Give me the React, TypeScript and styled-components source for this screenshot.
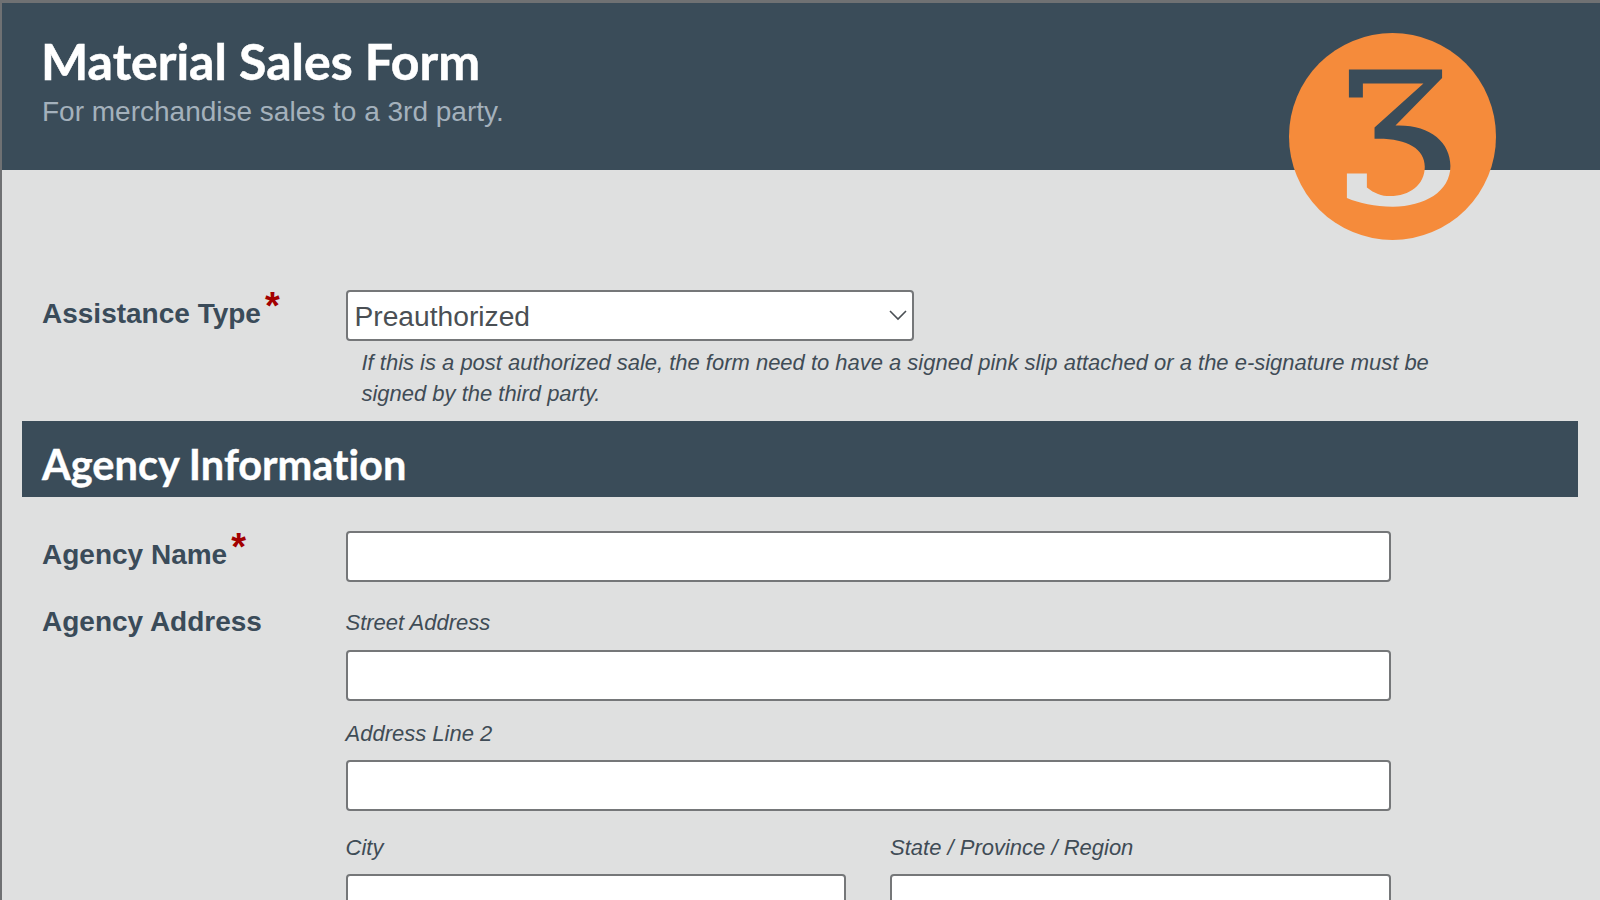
import { createGlobalStyle } from "styled-components";
import styled from "styled-components";

const GlobalStyle = createGlobalStyle`
  html, body {
    margin: 0;
    height: 100%;
    overflow: hidden;
  }
  body {
    background: #dfe0e0;
    font-family: "Liberation Sans", Arial, sans-serif;
  }
`;

const Page = styled.div`
  position: relative;
  height: 900px;
  overflow: hidden;
  box-sizing: border-box;
  border-top: 3px solid #6f7173;
  border-left: 2px solid #6f7173;
  background: #dfe0e0;
`;

const Header = styled.header`
  height: 167px;
  box-sizing: border-box;
  padding: 30px 40px 0;
  background: #3a4c59;
`;

const Title = styled.h1`
  margin: 0 0 0 -1px;
  font-family: "Lato", "Trebuchet MS", sans-serif;
  font-variant-ligatures: none;
  font-size: 50px;
  line-height: 56px;
  font-weight: 700;
  color: #fff;
  -webkit-text-stroke: 0.5px #fff;
`;

const Subtitle = styled.p`
  margin: 7px 0 0;
  font-size: 28px;
  line-height: 32px;
  color: #a4b1bc;
`;

const Badge = styled.svg`
  position: absolute;
  left: 1287px;
  top: 30px;
  width: 207px;
  height: 207px;
`;

const Main = styled.main`
  padding: 120px 22px 0 20px;
`;

const Row = styled.div<{ $mt?: number }>`
  display: grid;
  grid-template-columns: 303.5px 1045px;
  padding-left: 20px;
  margin-top: ${(p) => p.$mt ?? 0}px;
`;

const Label = styled.label`
  display: block;
  padding-top: 6px;
  font-size: 28px;
  line-height: 36px;
  font-weight: 700;
  color: #3a4b59;
`;

const Req = styled.span`
  color: #a30000;
  font-size: 38px;
  line-height: 0;
  margin-left: 4px;
  position: relative;
  top: -4px;
`;

const SelectWrap = styled.div`
  position: relative;
  width: 568px;
`;

const Select = styled.select`
  display: block;
  width: 100%;
  height: 51px;
  box-sizing: border-box;
  padding: 0 7px;
  appearance: none;
  background: #fff;
  border: 2px solid #757779;
  border-radius: 4px;
  font-family: inherit;
  font-size: 28.2px;
  color: #4a4f54;
`;

const Chevron = styled.svg`
  position: absolute;
  right: 7px;
  top: 18px;
  width: 18px;
  height: 14px;
  pointer-events: none;
`;

const Help = styled.p`
  margin: 6px 0 0;
  padding-left: 16px;
  width: 1085px;
  font-size: 21.97px;
  line-height: 31px;
  font-style: italic;
  color: #3f4c56;
`;

const Band = styled.div`
  height: 76px;
  margin-top: 12px;
  box-sizing: border-box;
  padding: 10px 20px 0;
  display: flex;
  align-items: center;
  background: #3a4c59;
`;

const BandTitle = styled.h2`
  margin: 0;
  font-family: "Lato", "Trebuchet MS", sans-serif;
  font-variant-ligatures: none;
  font-size: 41.5px;
  font-weight: 700;
  color: #fff;
  -webkit-text-stroke: 0.4px #fff;
`;

const Input = styled.input`
  display: block;
  width: 100%;
  height: 51px;
  box-sizing: border-box;
  background: #fff;
  border: 2px solid #757779;
  border-radius: 4px;
`;

const Caption = styled.div<{ $mt: number; $mb?: number }>`
  margin: ${(p) => p.$mt}px 0 ${(p) => p.$mb ?? 13}px;
  font-size: 22px;
  line-height: 26px;
  font-style: italic;
  color: #3f4c56;
`;

const Split = styled.div`
  display: grid;
  grid-template-columns: 500.5px 500.5px;
  column-gap: 44px;
`;

function LogoBadge() {
  return (
    <Badge viewBox="88 68 622 622">
      <defs>
        <linearGradient id="three" gradientUnits="userSpaceOnUse" x1="0" y1="0" x2="0" y2="780">
          <stop offset="0.6154" stopColor="#3a4c59" />
          <stop offset="0.6154" stopColor="#dfe0e0" />
        </linearGradient>
      </defs>
      <circle cx="399" cy="379" r="311" fill="#f58b3b" />
      <path
        fill="url(#three)"
        d="M268 178 H548 V203 L408 346 C510 342 573 395 573 468 C573 545 495 590 400 590 C345 590 300 580 262 564 V490 H322 V532 C345 550 365 558 392 558 C450 558 496 525 496 470 C496 415 440 383 345 386 V352 L492 220 H310 V262 H268 Z"
      />
    </Badge>
  );
}

export default function App() {
  return (
    <>
      <GlobalStyle />
      <Page>
        <Header>
          <Title>Material Sales Form</Title>
          <Subtitle>For merchandise sales to a 3rd party.</Subtitle>
        </Header>
        <LogoBadge />
        <Main>
          <Row>
            <Label>
              Assistance Type<Req>*</Req>
            </Label>
            <div>
              <SelectWrap>
                <Select defaultValue="Preauthorized">
                  <option>Preauthorized</option>
                </Select>
                <Chevron viewBox="0 0 18 14">
                  <path d="M1 3 L9 11 L17 3" fill="none" stroke="#4a4f54" strokeWidth="1.6" />
                </Chevron>
              </SelectWrap>
              <Help>
                If this is a post authorized sale, the form need to have a signed pink slip attached or a the e-signature must be signed by the third party.
              </Help>
            </div>
          </Row>
          <Band>
            <BandTitle>Agency Information</BandTitle>
          </Band>
          <Row $mt={34}>
            <Label>
              Agency Name<Req>*</Req>
            </Label>
            <Input />
          </Row>
          <Row $mt={16}>
            <Label>Agency Address</Label>
            <div>
              <Caption $mt={12} $mb={14}>Street Address</Caption>
              <Input />
              <Caption $mt={20}>Address Line 2</Caption>
              <Input />
              <Split>
                <div>
                  <Caption $mt={24}>City</Caption>
                  <Input />
                </div>
                <div>
                  <Caption $mt={24}>State / Province / Region</Caption>
                  <Input />
                </div>
              </Split>
            </div>
          </Row>
        </Main>
      </Page>
    </>
  );
}
